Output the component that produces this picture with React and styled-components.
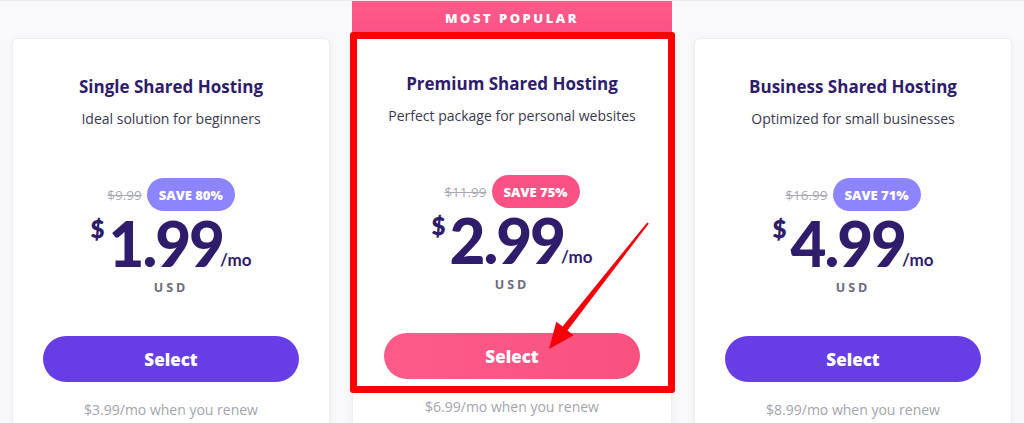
import React from "react";
import styled, { createGlobalStyle } from "styled-components";

const Global = createGlobalStyle`
  body {
    margin: 0;
    background: #f9f9fb;
    font-family: "Open Sans", "Lato", sans-serif;
  }
`;

const plans = [
  {
    title: "Single Shared Hosting",
    text: "Ideal solution for beginners",
    old: "$9.99",
    save: "SAVE 80%",
    price: "1.99",
    renew: "$3.99/mo when you renew",
  },
  {
    title: "Premium Shared Hosting",
    text: "Perfect package for personal websites",
    old: "$11.99",
    save: "SAVE 75%",
    price: "2.99",
    renew: "$6.99/mo when you renew",
    featured: true,
  },
  {
    title: "Business Shared Hosting",
    text: "Optimized for small businesses",
    old: "$16.99",
    save: "SAVE 71%",
    price: "4.99",
    renew: "$8.99/mo when you renew",
  },
];

const Page = styled.div`
  position: relative;
  height: 423px;
  overflow: hidden;
  display: flex;
  align-items: flex-start;
  gap: 22px;
  padding: 0 12px;
  border-top: 1px solid #ececef;
  box-sizing: border-box;
`;

const Featured = styled.div`
  position: relative;
  width: 320px;
  flex-shrink: 0;
  margin-top: -1px;
`;

const Ribbon = styled.div`
  height: 35px;
  background: linear-gradient(180deg, #fd5b8a, #fc5185);
  color: #fff;
  font-size: 13px;
  font-weight: 800;
  letter-spacing: 2.5px;
  display: flex;
  justify-content: center;
  padding-top: 9px;
  box-sizing: border-box;
`;

const Card = styled.div`
  width: ${(p) => (p.$featured ? "320px" : "318px")};
  flex-shrink: 0;
  margin-top: ${(p) => (p.$featured ? "0" : "37px")};
  height: 440px;
  background: #fff;
  border: 1px solid #ededf0;
  border-radius: ${(p) => (p.$featured ? "0" : "5px")};
  box-shadow: 0 2px 8px rgba(30, 20, 80, 0.05);
  box-sizing: border-box;
  padding: 36px 12px 0;
  display: flex;
  flex-direction: column;
  align-items: center;
  text-align: center;
`;

const Title = styled.h3`
  margin: 0;
  font-size: 17px;
  line-height: 24px;
  font-weight: 700;
  color: #2f1c6a;
`;

const Lead = styled.p`
  margin: 9px 0 0;
  font-size: 14px;
  line-height: 22px;
  color: #3b3950;
`;

const SaveRow = styled.div`
  margin-top: 48px;
  display: flex;
  align-items: center;
  gap: 5px;
`;

const Old = styled.span`
  font-size: 13.5px;
  color: #a8a8b0;
  text-decoration: line-through;
`;

const Badge = styled.span`
  height: 33px;
  padding: 0 12px;
  border-radius: 17px;
  display: flex;
  align-items: center;
  font-size: 13px;
  font-weight: 800;
  color: #fff;
  background: ${(p) => (p.$pink ? "#fc5185" : "#8c85ff")};
`;

const PriceRow = styled.div`
  margin-top: 1px;
  display: flex;
  align-items: flex-start;
  color: #2f1c6a;
  font-family: "Lato", sans-serif;
`;

const Currency = styled.span`
  font-size: 24px;
  line-height: 24px;
  font-weight: 800;
  margin-top: 5px;
  margin-right: 4px;
`;

const Amount = styled.span`
  font-size: 62px;
  line-height: 62px;
  font-weight: 900;
  letter-spacing: -2px;
`;

const Per = styled.span`
  align-self: flex-end;
  font-size: 17px;
  font-weight: 700;
  margin-bottom: 4px;
  margin-left: -3px;
`;

const Currency3 = styled.div`
  margin-top: 5px;
  font-size: 12.5px;
  line-height: 18px;
  font-weight: 700;
  letter-spacing: 3px;
  color: #6d6b7d;
`;

const Button = styled.button`
  margin-top: 39px;
  width: 256px;
  height: 46px;
  border: 0;
  border-radius: 23px;
  font-family: inherit;
  font-size: 17px;
  font-weight: 800;
  color: #fff;
  background: ${(p) =>
    p.$pink ? "linear-gradient(90deg, #fd5b8b, #f9517f)" : "#673de6"};
`;

const Renew = styled.div`
  margin-top: 18px;
  font-size: 14px;
  line-height: 20px;
  color: #a4a4ae;
`;

const Highlight = styled.div`
  position: absolute;
  top: 32px;
  left: -2px;
  width: 325px;
  height: 361px;
  border: 7px solid #ff0000;
  border-radius: 3px;
  box-sizing: border-box;
  pointer-events: none;
`;

const ArrowLayer = styled.svg`
  position: absolute;
  top: 0;
  left: 0;
  pointer-events: none;
`;

function Plan({ plan }) {
  return (
    <Card $featured={plan.featured}>
      <Title>{plan.title}</Title>
      <Lead>{plan.text}</Lead>
      <SaveRow>
        <Old>{plan.old}</Old>
        <Badge $pink={plan.featured}>{plan.save}</Badge>
      </SaveRow>
      <PriceRow>
        <Currency>$</Currency>
        <Amount>{plan.price}</Amount>
        <Per>/mo</Per>
      </PriceRow>
      <Currency3>USD</Currency3>
      <Button $pink={plan.featured}>Select</Button>
      <Renew>{plan.renew}</Renew>
    </Card>
  );
}

export default function App() {
  return (
    <>
      <Global />
      <Page>
        <Plan plan={plans[0]} />
        <Featured>
          <Ribbon>MOST POPULAR</Ribbon>
          <Plan plan={plans[1]} />
          <Highlight />
        </Featured>
        <Plan plan={plans[2]} />
        <ArrowLayer width="1024" height="423" viewBox="0 0 1024 423">
          <polygon
            fill="#f5000a"
            points="648.8,222.6 567.4,329.4 573.7,334.3 549,348 556.3,320.7 562.6,325.6 647.2,221.4"
          />
        </ArrowLayer>
      </Page>
    </>
  );
}
